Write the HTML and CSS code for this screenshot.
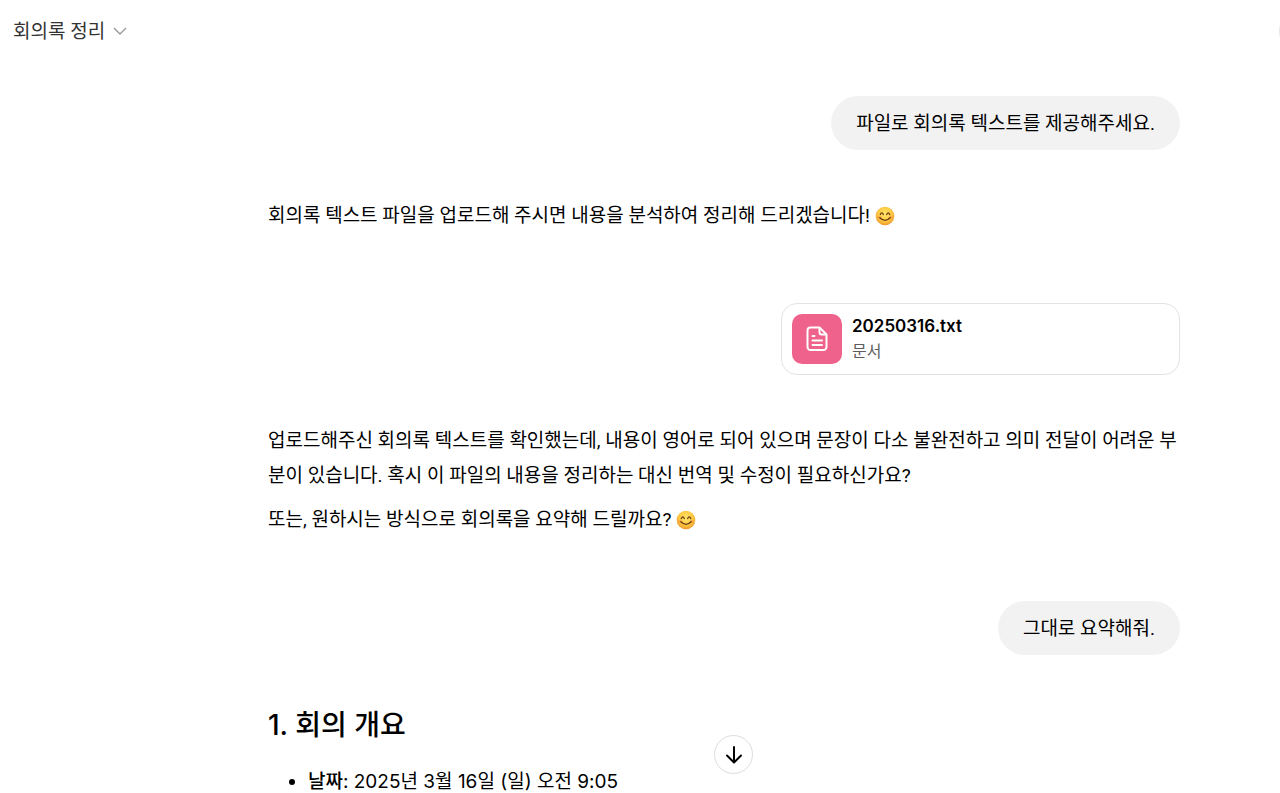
FILE: index.html
```html
<!DOCTYPE html>
<html lang="ko">

<head>
    <meta charset="UTF-8">
    <meta name="viewport" content="width=device-width, initial-scale=1.0">
    <title>회의록 정리</title>
    <link rel="stylesheet" href="styles.css">
</head>

<body>
    <!-- shared emoji -->
    <svg class="defs" aria-hidden="true">
        <defs>
            <radialGradient id="face" cx="50%" cy="40%" r="60%">
                <stop offset="0" stop-color="#ffe66b" />
                <stop offset="0.6" stop-color="#fdcb45" />
                <stop offset="1" stop-color="#ee992b" />
            </radialGradient>
            <symbol id="smile" viewBox="0 0 20 20">
                <circle cx="10" cy="10" r="9.3" fill="url(#face)" />
                <ellipse cx="4.2" cy="11.3" rx="2.2" ry="1.6" fill="#f58a3c" opacity="0.45" />
                <ellipse cx="15.8" cy="11.3" rx="2.2" ry="1.6" fill="#f58a3c" opacity="0.45" />
                <path d="M5.300 8.600q1.500-3.400 3 0M11.700 8.600q1.500-3.400 3 0M4.800 11.800q5.200 5.200 10.400 0" fill="none" stroke="#6b3a12" stroke-width="1.3" stroke-linecap="round" />
            </symbol>
        </defs>
    </svg>

    <header class="topbar">
        <button class="title" type="button">
            회의록 정리
            <svg class="chevron" viewBox="0 0 14 14" aria-hidden="true"><path d="M1 4l6 6 6-6" /></svg>
        </button>
        <button class="avatar" type="button" aria-label="프로필"></button>
    </header>

    <main class="thread">
        <div class="bubble">파일로 회의록 텍스트를 제공해주세요.</div>

        <div class="reply">
            <p>회의록 텍스트 파일을 업로드해 주시면 내용을 분석하여 정리해 드리겠습니다! <svg class="emoji" role="img" aria-label="😊"><use href="#smile" /></svg></p>
        </div>

        <div class="file">
            <span class="file-icon">
                <svg viewBox="0 0 26 28" aria-hidden="true">
                    <path d="M6.500 2.500h9l7 7V22a3 3 0 0 1-3 3h-13a3 3 0 0 1-3-3V5.500a3 3 0 0 1 3-3z" />
                    <path d="M15.500 3v4.500a2 2 0 0 0 2 2H22M8.500 11h2M8.500 15.500h9.500M8.500 20h9.500" />
                </svg>
            </span>
            <div class="file-info">
                <div class="file-name">20250316.txt</div>
                <div class="file-type">문서</div>
            </div>
        </div>

        <div class="reply">
            <p>업로드해주신 회의록 텍스트를 확인했는데, 내용이 영어로 되어 있으며 문장이 다소 불완전하고 의미 전달이 어려운 부분이 있습니다. 혹시 이 파일의 내용을 정리하는 대신 번역 및 수정이 필요하신가요?</p>
            <p>또는, 원하시는 방식으로 회의록을 요약해 드릴까요? <svg class="emoji" role="img" aria-label="😊"><use href="#smile" /></svg></p>
        </div>

        <div class="bubble">그대로 요약해줘.</div>

        <div class="summary">
            <h2>1. 회의 개요</h2>
            <ul>
                <li><strong>날짜</strong>: 2025년 3월 16일 (일) 오전 9:05</li>
            </ul>
        </div>
    </main>

    <button class="scroll-down" type="button" aria-label="아래로 스크롤">
        <svg viewBox="0 0 20 20" aria-hidden="true"><path d="M10 2v15M3 10.500l7 7 7-7" /></svg>
    </button>
</body>

</html>
```

FILE: styles.css
```css
* {
    box-sizing: border-box;
}

body {
    position: relative;
    height: 100vh;
    margin: 0;
    overflow: hidden;
    display: flex;
    flex-direction: column;
    background: #fff;
    color: #000;
    font-family: Roboto, "Noto Sans CJK KR", sans-serif;
    font-size: 19px;
    line-height: 35px;
}

button {
    font: inherit;
    cursor: pointer;
}

.defs {
    position: absolute;
    width: 0;
    height: 0;
}

.topbar {
    flex: none;
    display: flex;
    align-items: center;
    justify-content: space-between;
    height: 62px;
    padding-left: 13px;
}

.title {
    display: flex;
    align-items: center;
    gap: 8px;
    padding: 0;
    border: 0;
    background: none;
    color: #333;
}

.chevron {
    width: 14px;
    height: 14px;
    fill: none;
    stroke: #999;
    stroke-width: 1.4;
}

/* runs off the right edge */
.avatar {
    flex: none;
    width: 40px;
    height: 40px;
    margin-right: -39px;
    padding: 0;
    border: 0;
    border-radius: 50%;
    background: #e6e6e6;
}

.thread {
    flex: 1;
    min-height: 0;
    overflow: hidden;
    display: flex;
    flex-direction: column;
    padding: 34px 100px 0 268px;
}

.bubble {
    flex: none;
    align-self: flex-end;
    padding: 11px 25px 9px;
    border-radius: 28px;
    background: #f2f2f2;
    line-height: 34px;
}

.reply {
    flex: none;
    padding: 48px 0 64px;
}

.reply p {
    margin: 0 0 9px;
}

.reply p:last-child {
    margin-bottom: 0;
}

.emoji {
    width: 20px;
    height: 20px;
    vertical-align: -4px;
}

.file {
    flex: none;
    align-self: flex-end;
    display: flex;
    align-items: center;
    gap: 10px;
    width: 399px;
    max-width: 100%;
    margin-top: 6px;
    padding: 10px;
    border: 1px solid #e3e3e3;
    border-radius: 16px;
}

.file-icon {
    display: flex;
    align-items: center;
    justify-content: center;
    width: 50px;
    height: 50px;
    border-radius: 10px;
    background: #ef628b;
}

.file-icon svg {
    width: 26px;
    height: 28px;
    fill: none;
    stroke: #fff;
    stroke-width: 2;
    stroke-linecap: round;
    stroke-linejoin: round;
}

.file-info {
    line-height: 25px;
}

.file-name {
    font-family: Inter, sans-serif;
    font-size: 17px;
    font-weight: 600;
}

.file-type {
    color: #5d5d5d;
    font-size: 16px;
}

.summary {
    flex: none;
    padding-top: 50px;
    font-family: Inter, "Noto Sans CJK KR", sans-serif;
}

.summary h2 {
    margin: 0 0 25px;
    font-size: 28px;
    font-weight: 500;
    line-height: 40px;
}

.summary ul {
    margin: 0;
    padding-left: 40px;
    line-height: 24px;
}

.summary strong {
    font-weight: 500;
}

.scroll-down {
    position: absolute;
    left: calc(50% + 74px);
    bottom: 19px;
    display: flex;
    align-items: center;
    justify-content: center;
    width: 39px;
    height: 39px;
    padding: 0;
    border: 1px solid #ddd;
    border-radius: 50%;
    background: #fff;
}

.scroll-down svg {
    width: 20px;
    height: 20px;
    fill: none;
    stroke: #000;
    stroke-width: 2;
    stroke-linecap: round;
    stroke-linejoin: round;
}
```
